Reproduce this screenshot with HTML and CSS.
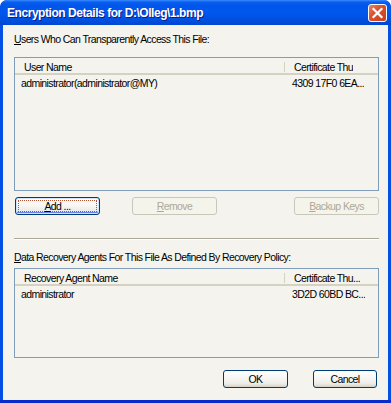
FILE: index.html
```html
<!DOCTYPE html>
<html>
<head>
<meta charset="utf-8">
<link rel="stylesheet" href="styles.css">
</head>
<body>
<div class="window">
  <div class="titlebar">
    <span class="title">Encryption Details for D:\Olleg\1.bmp</span>
    <span class="close">
      <svg width="17" height="16" viewBox="0 0 17 16"><path d="M4.5 4 L12.5 12 M12.5 4 L4.5 12" stroke="#fff" stroke-width="2.2" stroke-linecap="square"/></svg>
    </span>
  </div>
  <div class="client">
    <div class="label label1"><u>U</u>sers Who Can Transparently Access This File:</div>
    <div class="listbox lb1">
      <div class="lv-header">
        <div class="col c1 hsep">User Name</div>
        <div class="col c2">Certificate Thu</div>
      </div>
      <div class="lv-row">
        <div class="col c1">administrator(administrator@MY)</div>
        <div class="col c2">4309 17F0 6EA...</div>
      </div>
    </div>
    <div class="btnrow">
      <button class="btn focused"><span class="focus"><u>A</u>dd ...</span></button>
      <button class="btn disabled remove"><u>R</u>emove</button>
      <button class="btn disabled backup"><u>B</u>ackup Keys</button>
    </div>
    <div class="sep"></div>
    <div class="label label2"><u>D</u>ata Recovery Agents For This File As Defined By Recovery Policy:</div>
    <div class="listbox lb2">
      <div class="lv-header">
        <div class="col c1 hsep">Recovery Agent Name</div>
        <div class="col c2">Certificate Thu...</div>
      </div>
      <div class="lv-row">
        <div class="col c1">administrator</div>
        <div class="col c2">3D2D 60BD BC...</div>
      </div>
    </div>
    <div class="footer">
      <button class="btn ok">OK</button>
      <button class="btn cancel">Cancel</button>
    </div>
  </div>
</div>
</body>
</html>
```

FILE: styles.css
```css
html, body {
  margin: 0;
  padding: 0;
  background: #ffffff;
}
body {
  font-family: "Liberation Sans", Arial, sans-serif;
  font-size: 10.5px;
  letter-spacing: -0.6px;
  color: #000;
}
.window {
  width: 391px;
  height: 403px;
  box-sizing: border-box;
  display: flex;
  flex-direction: column;
  background: #0450E4;
  border-radius: 7px 7px 0 0;
  padding: 0 3px 0 3px;
  border-bottom: 3px solid #0A2BC9;
  overflow: hidden;
}
.titlebar {
  height: 25px;
  flex: none;
  margin: 0 -3px;
  display: flex;
  align-items: center;
  background: linear-gradient(to bottom, #3A8CFF 0, #0A5FF0 2px, #0055EA 6px, #0058EE 12px, #004FE0 20px, #0046D0 25px);
  border-radius: 7px 7px 0 0;
}
.title {
  padding-left: 7px;
  color: #fff;
  font-weight: bold;
  font-size: 12px;
  letter-spacing: -0.45px;
  text-shadow: 1px 1px 0 #0A1C8F;
  white-space: nowrap;
  flex: 1;
}
.close {
  width: 19px;
  height: 18px;
  box-sizing: border-box;
  margin-right: 4px;
  border: 1px solid #fff;
  border-radius: 3px;
  background: linear-gradient(135deg, #E8826A 0%, #D9532F 40%, #C5421F 100%);
  display: flex;
  align-items: center;
  justify-content: center;
}
.client {
  flex: 1;
  background: #F4F3EE;
  padding: 0 9px 0 11px;
  display: flex;
  flex-direction: column;
}
.label {
  line-height: 13px;
  white-space: nowrap;
}
.label1 { margin-top: 8px; }
.listbox {
  box-sizing: border-box;
  border: 1px solid #7F9DB9;
  background: #F4F3EE;
}
.lb1 { margin-top: 11px; height: 134px; }
.lb2 { margin-top: 4px; height: 90px; }
.lv-header {
  display: flex;
  height: 17px;
  box-sizing: border-box;
  padding-top: 3px;
  border-bottom: 2px solid #D6D2C2;
  line-height: 13px;
}
.lv-row {
  display: flex;
  line-height: 13px;
  padding-top: 2px;
}
.col { white-space: nowrap; overflow: hidden; }
.c1 { width: 270px; flex: none; box-sizing: border-box; }
.lv-header .c1 { padding-left: 9px; }
.lv-header .c2 { padding-left: 9px; }
.lv-row .c1 { padding-left: 6px; }
.lv-row .c2 { padding-left: 7px; }
.hsep { position: relative; }
.hsep::after {
  content: "";
  position: absolute;
  right: 0;
  top: 1px;
  width: 1px;
  height: 10px;
  background: #D6D2C2;
  box-shadow: 1px 0 0 #fff;
}
.btnrow {
  display: flex;
  margin-top: 6px;
  padding-left: 1px;
}
.btn {
  height: 18px;
  width: 85px;
  box-sizing: border-box;
  padding: 0;
  font-family: inherit;
  font-size: inherit;
  letter-spacing: inherit;
  color: #000;
  border: 1px solid #003C74;
  border-radius: 3px;
  background: linear-gradient(to bottom, #FFFFFF 0%, #F6F5F1 50%, #ECEBE6 80%, #D6D0C5 100%);
  display: flex;
  align-items: center;
  justify-content: center;
}
.btn.focused {
  box-shadow: inset 0 0 0 1px #CEE7FF, inset 0 -1px 0 1px #6982EE;
}
.focus {
  display: flex;
  align-items: center;
  justify-content: center;
  box-sizing: border-box;
  width: 79px;
  height: 12px;
  border: 1px dotted #C0502A;
}
.btn.disabled {
  border-color: #C9C7BA;
  color: #ACA899;
  background: #F5F4EA;
}
.remove { margin-left: 32px; }
.backup { margin-left: auto; }
.sep {
  margin-top: 23px;
  height: 1px;
  background: #ACA899;
  border-bottom: 1px solid #fff;
}
.label2 { margin-top: 11px; }
.footer {
  display: flex;
  justify-content: flex-end;
  margin-top: 12px;
  padding-right: 2px;
}
.ok { width: 65px; }
.cancel { width: 64px; margin-left: 25px; }
```
